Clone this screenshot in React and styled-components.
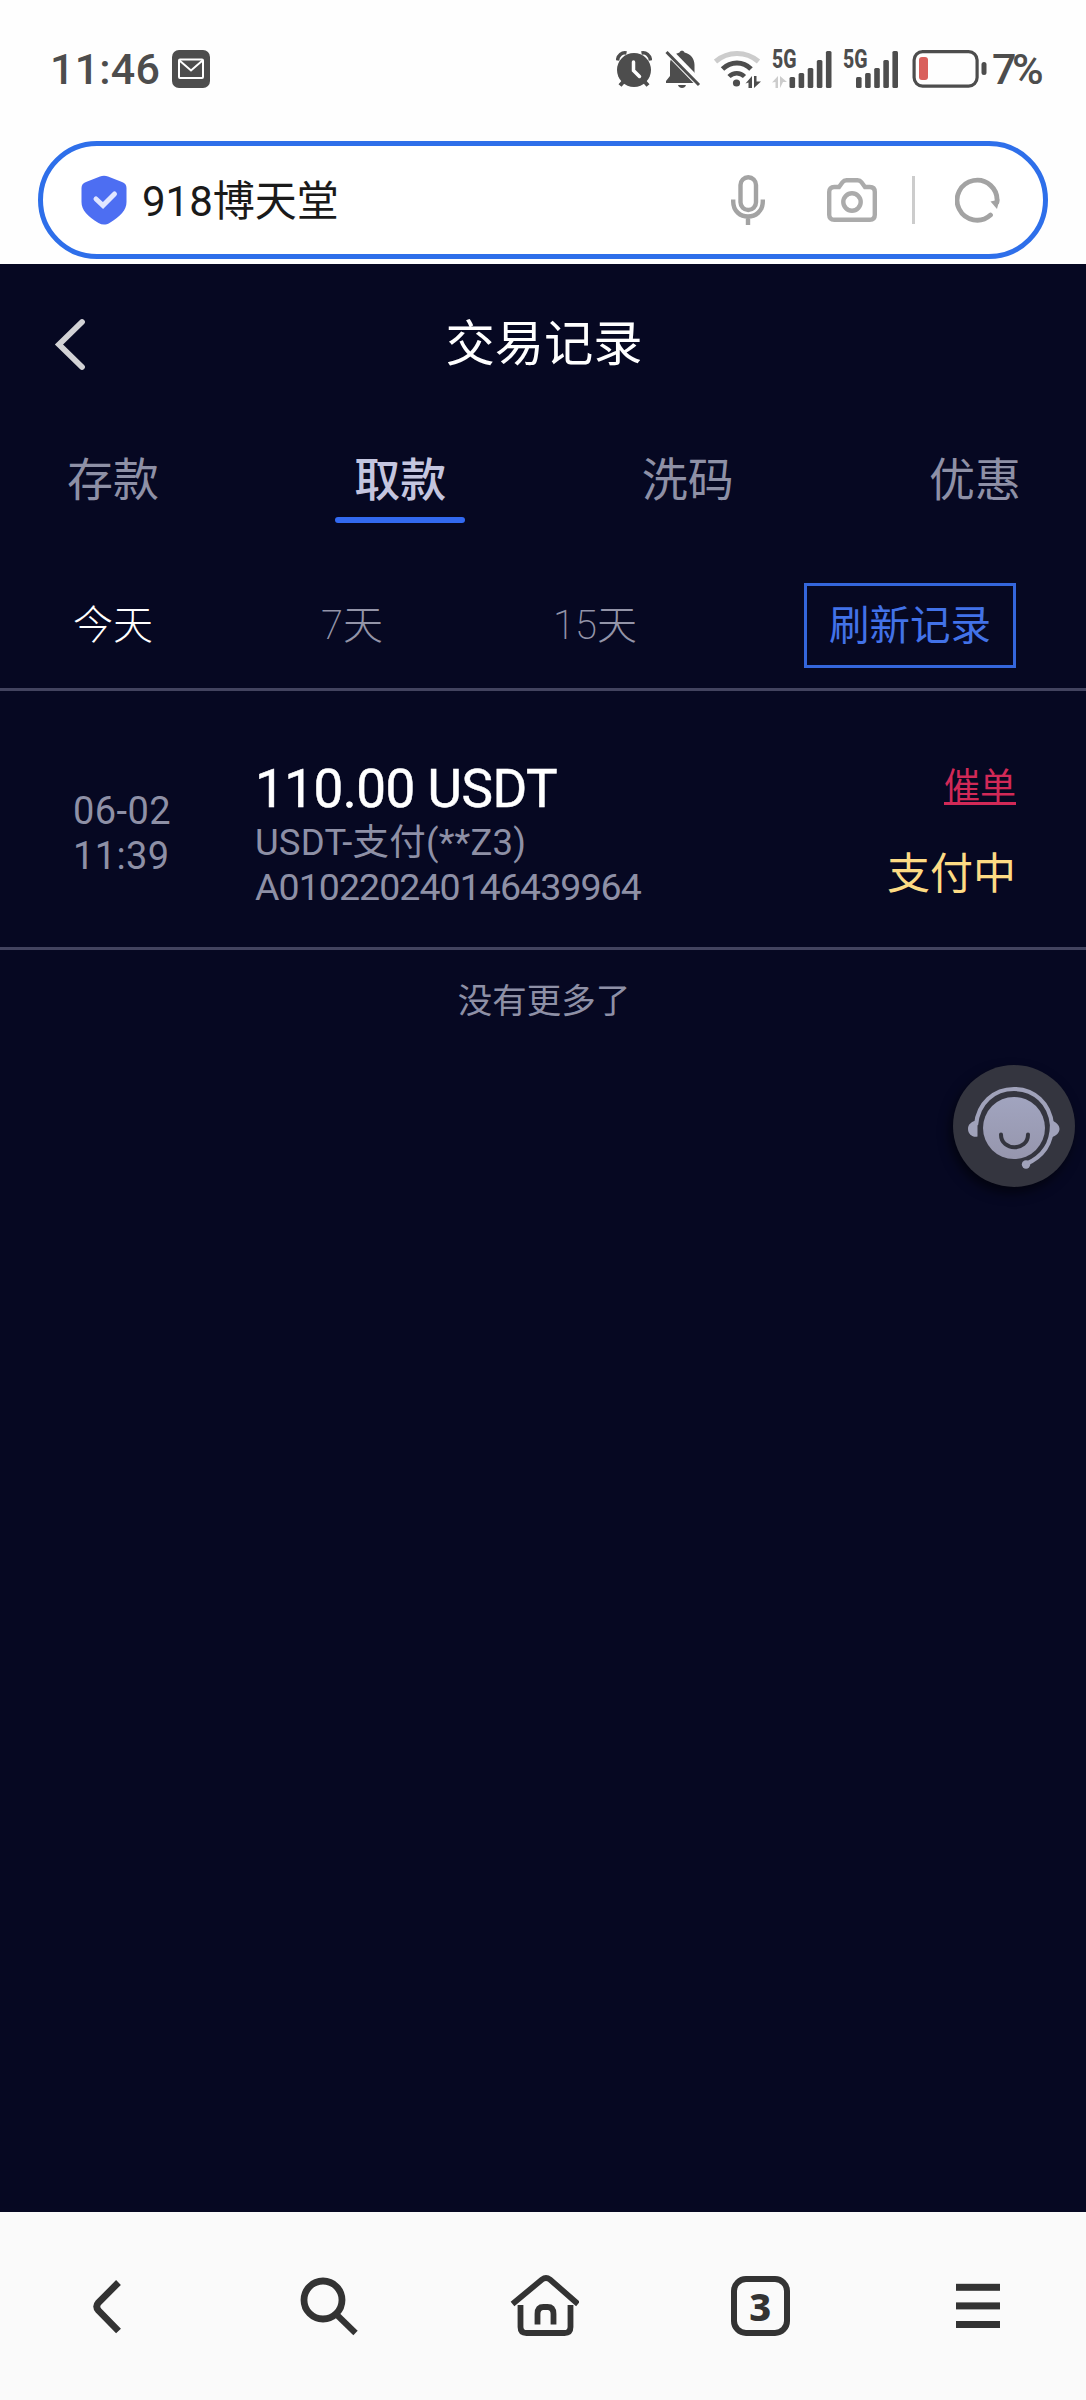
import React from "react";
import styled, { createGlobalStyle } from "styled-components";

const GlobalStyle = createGlobalStyle`
  * {
    box-sizing: border-box;
  }

  body {
    margin: 0;
    background: #fefefe;
    font-family: Roboto, "Noto Sans CJK SC", sans-serif;
  }

  button {
    margin: 0;
    padding: 0;
    border: 0;
    background: none;
    font: inherit;
    color: inherit;
  }

  svg {
    display: block;
    flex: none;
  }
`;

const Screen = styled.div`
  width: 1086px;
  height: 2400px;
  display: flex;
  flex-direction: column;
  overflow: hidden;
`;

const StatusBar = styled.header`
  height: 141px;
  flex: none;
  display: flex;
  align-items: flex-start;
  justify-content: space-between;
  padding: 47px 44px 0 50px;
  color: #4d4d4d;
`;

const StatusGroup = styled.div`
  height: 44px;
  display: flex;
  align-items: center;
  gap: ${({ $gap }) => $gap || 0}px;
`;

const Clock = styled.span`
  width: 110px;
  font-size: 43px;
  font-weight: 500;
  line-height: 44px;
  letter-spacing: 0.2px;
`;

const BatteryText = styled.span`
  width: 50px;
  margin-left: 5px;
  font-size: 43px;
  font-weight: 500;
  line-height: 44px;
  letter-spacing: -4.5px;
`;

const NetworkLabel = styled.text`
  font-family: Roboto, sans-serif;
  font-size: 25px;
  font-weight: 800;
  fill: #4d4d4d;
`;

const AddressArea = styled.div`
  height: 123px;
  flex: none;
  padding: 0 38px;
`;

const AddressBar = styled.div`
  height: 118px;
  display: flex;
  align-items: center;
  padding: 0 43px 0 38px;
  border: 5px solid #2e6fea;
  border-radius: 59px;
  background: #fff;
`;

const AddressText = styled.span`
  flex: 1;
  margin-left: 15px;
  padding-top: 4px;
  font-size: 42px;
  line-height: 60px;
  color: #1a1a1a;
`;

const Tools = styled.div`
  display: flex;
  align-items: center;

  svg + svg {
    margin-left: 62px;
  }
`;

const ToolSeparator = styled.i`
  width: 3px;
  height: 48px;
  margin: 0 40px 0 35px;
  background: #ccc;
`;

const Page = styled.main`
  position: relative;
  flex: 1;
  background: #060822;
`;

const TitleBar = styled.div`
  height: 160px;
  display: grid;
  grid-template-columns: 120px 1fr 120px;
  align-items: center;
  padding-left: 2px;
`;

const BackButton = styled.button`
  padding-left: 48px;
`;

const Title = styled.h1`
  margin: 0;
  font-size: 49.3px;
  font-weight: 400;
  line-height: 60px;
  text-align: center;
  color: #fff;
`;

const Tabs = styled.nav`
  height: 136px;
  display: flex;
  justify-content: space-between;
  padding: 23px 46px 0 48px;
`;

const Tab = styled.button`
  width: 130px;
  height: 76px;
  padding-top: 2px;
  display: flex;
  flex-direction: column;
  align-items: center;
  justify-content: space-between;
  font-size: 46px;
  font-weight: ${({ $active }) => ($active ? 500 : 400)};
  line-height: 62px;
  color: ${({ $active }) => ($active ? "#c4c5df" : "#8e90a6")};

  &::after {
    content: "";
    width: 130px;
    height: 6px;
    border-radius: 3px;
    background: ${({ $active }) => ($active ? "#3269f0" : "transparent")};
  }
`;

const FilterRow = styled.div`
  height: 131px;
  display: flex;
  align-items: flex-start;
  padding: 23px 70px 0 73px;
  border-bottom: 3px solid #42435f;
`;

const Filter = styled.button`
  width: ${({ $width }) => $width}px;
  height: 85px;
  text-align: left;
  font-size: 40px;
  font-weight: 200;
  line-height: 79px;
  color: ${({ $active }) => ($active ? "#fff" : "#9394a8")};
`;

const RefreshButton = styled.button`
  width: 212px;
  height: 85px;
  margin-left: auto;
  border: 3px solid #3466dc;
  font-size: 40.5px;
  line-height: 78px;
  color: #4272e8;
`;

const Record = styled.article`
  height: 259px;
  display: flex;
  padding: 72px 70px 0 73px;
  border-bottom: 3px solid #42435f;
`;

const When = styled.time`
  width: 182px;
  padding-top: 26px;
  font-size: 38px;
  line-height: 45.3px;
  font-weight: 400;
  letter-spacing: 0.4px;
  white-space: pre-line;
  color: #8e90a6;
`;

const Details = styled.div`
  flex: 1;
`;

const Amount = styled.div`
  height: 57px;
  padding-top: 1px;
  font-size: 53px;
  font-weight: 400;
  line-height: 50px;
  letter-spacing: -0.5px;
  white-space: nowrap;
  color: #fff;
  -webkit-text-stroke: 0.5px #fff;
`;

const Meta = styled.div`
  font-size: ${({ $size }) => $size}px;
  line-height: 45.3px;
  letter-spacing: ${({ $spacing }) => $spacing}px;
  white-space: nowrap;
  color: #8e90a6;
`;

const Actions = styled.div`
  display: flex;
  flex-direction: column;
  align-items: flex-end;
`;

const Urge = styled.a`
  height: 48px;
  font-size: 36px;
  line-height: 49px;
  color: #d12957;
  text-decoration: underline;
  text-decoration-thickness: 3px;
  text-underline-offset: 3px;
`;

const Status = styled.span`
  margin-top: 33px;
  font-size: 43px;
  line-height: 60px;
  color: #fddb84;
`;

const EndOfList = styled.p`
  margin: 0;
  padding: 28px 0 0 2px;
  font-size: 34.5px;
  line-height: 46px;
  text-align: center;
  color: #8e90a6;
`;

// Floats over the list, pinned to the right edge
const SupportButton = styled.button`
  position: absolute;
  top: 801px;
  right: 11px;
  width: 122px;
  height: 122px;
  border-radius: 50%;
  background: #34353f;
  box-shadow: -3px 6px 12px rgba(0, 0, 0, 0.55);
`;

const Toolbar = styled.footer`
  height: 188px;
  flex: none;
  display: grid;
  grid-template-columns: repeat(5, 1fr);
  justify-items: center;
  padding-top: 60px;
  background: #fafafa;
`;

const ToolbarButton = styled.button`
  width: 72px;
  height: 68px;
`;

const TabCount = styled.span`
  width: 59px;
  height: 60px;
  margin: -1px auto 0;
  display: flex;
  align-items: center;
  justify-content: center;
  border: 6px solid #333;
  border-radius: 15px;
  font-family: "Noto Sans", sans-serif;
  font-size: 38px;
  font-weight: 800;
  line-height: 48px;
  color: #333;
`;

const MailIcon = () => (
  <svg width="38" height="38" viewBox="0 0 38 38" fill="none">
    <rect width="38" height="38" rx="7" fill="#4d4d4d" />
    <rect x="7" y="9.5" width="24" height="18.5" rx="1" stroke="#fff" strokeWidth="2" />
    <path d="M7.5 10.5 19 20.5l11.5-10" stroke="#fff" strokeWidth="2" />
  </svg>
);

const AlarmIcon = () => (
  <svg width="36" height="38" viewBox="0 0 36 38" fill="none">
    <circle cx="18" cy="20" r="17" fill="#4d4d4d" />
    <path d="M8 31 4 35.5M28 31l4 4.5" stroke="#4d4d4d" strokeWidth="4" />
    <path d="M1.5 10.5C2 5 6 2 10.5 3M34.5 10.5C34 5 30 2 25.5 3" stroke="#4d4d4d" strokeWidth="3.5" />
    <path d="M17.5 12v8.5l6 6" stroke="#fefefe" strokeWidth="3.5" strokeLinecap="round" />
  </svg>
);

const BellOffIcon = () => (
  <svg width="36" height="40" viewBox="0 0 36 40">
    <path d="M14.5 3.5C15 1 19 1 19.5 3.5 26 5 29.5 10 29.5 16v8L34 31v3H1v-2l4-5V15C5 9 9 5 14.5 3.5Z" fill="#4d4d4d" />
    <path d="M0-1 36 36" stroke="#fefefe" strokeWidth="8" />
    <path d="M1.5 3 34 36" stroke="#4d4d4d" strokeWidth="3" />
    <path d="M13 36h8c-1 4-7 4-8 0Z" fill="#4d4d4d" />
  </svg>
);

const WifiIcon = () => (
  <svg width="47" height="38" viewBox="0 0 47 38" fill="none">
    <path d="M1.5 11.5C14 .8 32 .8 44.5 11.5" stroke="#ccc" strokeWidth="5" />
    <path d="M8.5 19C17 11 29 11 37 19" stroke="#4d4d4d" strokeWidth="5" />
    <path d="M15 26.5c4.5-4.5 11-4.5 15.5 0" stroke="#4d4d4d" strokeWidth="4.5" />
    <circle cx="22.5" cy="33" r="3.6" fill="#4d4d4d" />
    <path d="M31.5 33.5 38 26v12h-3.5v-5.5ZM40 38V26h2.5v5.5H47Z" fill="#4d4d4d" />
  </svg>
);

const SignalIcon = ({ start, transfer }) => (
  <svg width={start + 43} height="56" viewBox={`0 -8 ${start + 43} 56`}>
    <NetworkLabel x="0" y="19" textLength="24.5" lengthAdjust="spacingAndGlyphs">
      5G
    </NetworkLabel>
    {transfer && <path d="M0 33.5 6 27v12H3.5v-6ZM8 39V27l7 6h-4Z" fill="#ccc" />}
    {[11, 15, 20, 28, 37].map((h, i) => (
      <rect key={h} x={start + i * 9.1} y={39 - h} width="5.6" height={h} rx="1.5" fill="#4d4d4d" />
    ))}
  </svg>
);

const BatteryIcon = () => (
  <svg width="75" height="38" viewBox="0 0 75 38">
    <rect x="2.1" y="1.6" width="63" height="34.5" rx="8.5" fill="none" stroke="#4d4d4d" strokeWidth="3.2" />
    <rect x="7" y="7" width="9" height="23" rx="3" fill="#d9605c" />
    <rect x="69.5" y="12" width="5" height="13" rx="2.5" fill="#4d4d4d" />
  </svg>
);

const ShieldIcon = () => (
  <svg width="46" height="50" viewBox="0 0 46 50" fill="none">
    <path d="M19 1.6c2.5-1 5.5-1 8 0L41 7c3 1.2 4.5 3 4.5 6v14c0 8-6 14.5-17 21-3.5 2-7.5 2-11 0C6.5 41.5.5 35 .5 27V13c0-3 1.5-4.8 4.5-6Z" fill="#4d6ef2" />
    <path d="m15 24 7 6.5L33.5 19" stroke="#e1e6ff" strokeWidth="5" strokeLinecap="round" />
  </svg>
);

const MicIcon = () => (
  <svg width="34" height="50" viewBox="0 0 34 50" fill="none" stroke="#a3a3a3" strokeWidth="4.4">
    <rect x="9.5" y="2.2" width="15.5" height="32.8" rx="7.75" />
    <path d="M2.2 24.5v2c0 20 29.6 20 29.6 0v-2M17 42v8" />
  </svg>
);

const CameraIcon = () => (
  <svg width="50" height="44" viewBox="0 0 50 44" fill="none" stroke="#ababab" strokeWidth="4.4">
    <path d="M7.2 9H12l3.5-4.7q1.5-2 4-2h11q2.500 0 4 2L38 9h4.800q5 0 5 5v22.800q0 5-5 5H7.200q-5 0-5-5V14q0-5 5-5Z" />
    <circle cx="25" cy="24" r="8.7" />
  </svg>
);

const ReloadIcon = () => (
  <svg width="45" height="46" viewBox="0 0 45 46" fill="none">
    <path d="M35.5 38A20 20 0 1 1 42 25" stroke="#a3a3a3" strokeWidth="4.8" strokeLinecap="round" />
    <path d="m35.5 24.5 9-2-2.5 9.500Z" fill="#a3a3a3" />
  </svg>
);

const PageBackIcon = () => (
  <svg width="36" height="55" viewBox="0 0 36 55" fill="none">
    <path d="M32 5 9 27.5 32 50" stroke="#d2d2d5" strokeWidth="5.8" strokeLinecap="round" />
  </svg>
);

const SupportIcon = () => (
  <svg width="122" height="122" viewBox="0 0 122 122" fill="none">
    <defs>
      <linearGradient id="face" x1="0" y1="0" x2="0" y2="1">
        <stop stopColor="#a1a4bf" />
        <stop offset="1" stopColor="#9696ad" />
      </linearGradient>
    </defs>
    <circle cx="61" cy="63" r="31" fill="url(#face)" />
    <path d="M23 60C25 38 41 24 61 24s36 14 38 36c0 19-10 32-26 39" stroke="#a0a2ba" strokeWidth="4.2" />
    <path d="M24.5 55v16.5c-4 1.500-9.500-2-9.500-7.500 0-4 2.500-6.500 6.500-8ZM98 55l2 1c4 2 6.500 4.500 6.500 8s-3 7-8.500 8.500Z" fill="#a0a2ba" />
    <circle cx="73" cy="99.5" r="4.2" fill="#a0a2ba" />
    <path d="M48 69.5c0 17 27 17 27 0" stroke="#34353f" strokeWidth="4" strokeLinecap="round" />
  </svg>
);

const NavBackIcon = () => (
  <svg width="72" height="68" viewBox="0 0 72 68" fill="none">
    <path d="M45.5 10.5 25.5 30.5q-3.5 4 0 8L45.5 59" stroke="#333" strokeWidth="6.8" />
  </svg>
);

const SearchIcon = () => (
  <svg width="72" height="68" viewBox="0 0 72 68" fill="none" stroke="#333">
    <circle cx="33" cy="28" r="19" strokeWidth="6.8" />
    <path d="m47 43 18.5 18" strokeWidth="6.2" />
  </svg>
);

// The walls start below the eaves, leaving a thin gap under the roof line
const HomeIcon = () => (
  <svg width="72" height="68" viewBox="0 0 72 68" fill="none" stroke="#333" strokeWidth="5.8">
    <path d="M5.5 32 35 7.5q4-3 8 0L71 32" />
    <path d="M13.5 33V55q0 6 6 6h38q6 0 6-6V33M30.500 52.500V42q0-7 6-7h4q6 0 6 7v10.500" />
  </svg>
);

const MenuIcon = () => (
  <svg width="72" height="68" viewBox="0 0 72 68" fill="#333">
    <rect x="15" y="11.8" width="44" height="7" />
    <rect x="15" y="30.4" width="44" height="7" />
    <rect x="15" y="49" width="44" height="7" />
  </svg>
);

const tabs = ["存款", "取款", "洗码", "优惠"];

const App = () => {
  return (
    <Screen>
      <GlobalStyle />
      <StatusBar>
        <StatusGroup $gap={12}>
          <Clock>11:46</Clock>
          <MailIcon />
        </StatusGroup>
        <StatusGroup $gap={13}>
          <AlarmIcon />
          <BellOffIcon />
          <StatusGroup $gap={11}>
            <WifiIcon />
            <SignalIcon start={17.5} transfer />
            <SignalIcon start={13} />
          </StatusGroup>
          <StatusGroup>
            <BatteryIcon />
            <BatteryText>7%</BatteryText>
          </StatusGroup>
        </StatusGroup>
      </StatusBar>

      <AddressArea>
        <AddressBar>
          <ShieldIcon />
          <AddressText>918博天堂</AddressText>
          <Tools>
            <MicIcon />
            <CameraIcon />
            <ToolSeparator />
            <ReloadIcon />
          </Tools>
        </AddressBar>
      </AddressArea>

      <Page>
        <TitleBar>
          <BackButton aria-label="返回">
            <PageBackIcon />
          </BackButton>
          <Title>交易记录</Title>
        </TitleBar>

        <Tabs>
          {tabs.map((tab) => (
            <Tab key={tab} $active={tab === "取款"}>
              {tab}
            </Tab>
          ))}
        </Tabs>

        <FilterRow>
          <Filter $width={248} $active>
            今天
          </Filter>
          <Filter $width={232}>7天</Filter>
          <Filter $width={150}>15天</Filter>
          <RefreshButton>刷新记录</RefreshButton>
        </FilterRow>

        <Record>
          <When>{"06-02\n11:39"}</When>
          <Details>
            <Amount>110.00 USDT</Amount>
            <Meta $size={36.5} $spacing={0.2}>
              USDT-支付(**Z3)
            </Meta>
            <Meta $size={37.5} $spacing={-0.95}>
              A010220240146439964
            </Meta>
          </Details>
          <Actions>
            <Urge>催单</Urge>
            <Status>支付中</Status>
          </Actions>
        </Record>

        <EndOfList>没有更多了</EndOfList>

        <SupportButton aria-label="客服">
          <SupportIcon />
        </SupportButton>
      </Page>

      <Toolbar>
        <ToolbarButton>
          <NavBackIcon />
        </ToolbarButton>
        <ToolbarButton>
          <SearchIcon />
        </ToolbarButton>
        <ToolbarButton>
          <HomeIcon />
        </ToolbarButton>
        <ToolbarButton>
          <TabCount>3</TabCount>
        </ToolbarButton>
        <ToolbarButton>
          <MenuIcon />
        </ToolbarButton>
      </Toolbar>
    </Screen>
  );
};

export default App;
